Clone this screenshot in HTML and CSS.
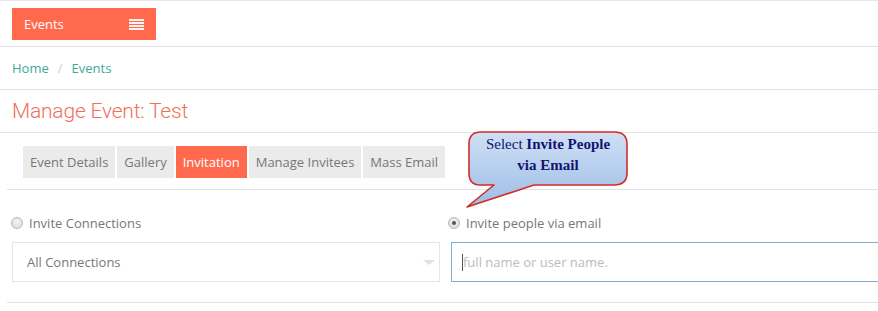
FILE: index.html
```html
<!DOCTYPE html>
<html>
<head>
<meta charset="utf-8">
<link rel="stylesheet" href="styles.css">
</head>
<body>
<div class="page">
  <div class="topbar">
    <div class="menu-btn">
      <span class="menu-label">Events</span>
      <span class="burger"><i></i><i></i><i></i><i></i></span>
    </div>
  </div>
  <div class="breadcrumb">
    <a class="crumb">Home</a><span class="sep">/</span><a class="crumb">Events</a>
  </div>
  <div class="title-row">
    <h1 class="title">Manage Event: Test</h1>
  </div>
  <div class="tabs-row">
    <div class="tabs">
      <span class="tab">Event Details</span>
      <span class="tab">Gallery</span>
      <span class="tab active">Invitation</span>
      <span class="tab">Manage Invitees</span>
      <span class="tab">Mass Email</span>
    </div>
  </div>
  <div class="form">
    <div class="col col-left">
      <label class="radio-line"><span class="radio"></span><span>Invite Connections</span></label>
      <div class="select">
        <span>All Connections</span>
        <span class="caret"></span>
      </div>
    </div>
    <div class="col col-right">
      <label class="radio-line"><span class="radio checked"></span><span>Invite people via email</span></label>
      <div class="input"><span class="cursor"></span><span class="placeholder">full name or user name.</span></div>
    </div>
  </div>

  <div class="callout">
    <svg class="callout-shape" width="170" height="84" viewBox="0 0 170 84">
      <defs>
        <linearGradient id="bg" x1="0" y1="0" x2="0" y2="1">
          <stop offset="0" stop-color="#cfe0f5"/>
          <stop offset="1" stop-color="#9dbde6"/>
        </linearGradient>
      </defs>
      <path d="M20 3 H148 Q161 3 161 15 V44 Q161 56 148 56 H68 L1 78 L28 56 H14 Q3 56 3 44 V15 Q3 3 15 3 Z" fill="url(#bg)" stroke="#d42a2a" stroke-width="1.6" stroke-linejoin="round"/>
    </svg>
    <div class="callout-text">Select <b>Invite People</b><br><b>via Email</b></div>
  </div>
</div>
</body>
</html>
```

FILE: styles.css
```css
* { box-sizing: border-box; }
html, body { margin: 0; padding: 0; background: #fff; }
body { overflow: hidden; width: 878px; height: 311px; }
.page {
  position: relative;
  font-family: "Open Sans", "Liberation Sans", sans-serif;
  font-size: 13px;
  color: #777;
}
.topbar {
  border-top: 1px solid #e6e8ea;
  border-bottom: 1px solid #dfe4e7;
  padding: 7px 12px 6px;
  height: 47px;
}
.menu-btn {
  width: 144px;
  height: 32px;
  background: #ff6a4f;
  display: flex;
  align-items: center;
  justify-content: space-between;
  padding: 0 12px 0 12px;
  color: #fff;
}
.menu-label { font-size: 13px; }
.burger { display: flex; flex-direction: column; gap: 1px; width: 15px; margin-top: 1px; }
.burger i { display: block; height: 2px; background: #fff3ee; }
.breadcrumb {
  height: 43px;
  border-bottom: 1px solid #dfe4e7;
  padding: 12px 12px 0;
  font-size: 13px;
}
.crumb { color: #3aa99c; }
.sep { color: #ccc; margin: 0 9px; }
.title-row {
  height: 43px;
  border-bottom: 1px solid #dfe4e7;
  padding: 0 12px;
}
.title {
  margin: 0;
  padding-top: 8px;
  font-family: Roboto, "Liberation Sans", sans-serif;
  font-weight: 300;
  font-size: 21px;
  letter-spacing: -0.2px;
  color: #f1705a;
  line-height: 26px;
}
.tabs-row {
  margin-left: 7px;
  height: 57px;
  border-bottom: 1px solid #dfe4e7;
  padding: 13px 0 0 16px;
}
.tabs { display: flex; gap: 2px; }
.tab {
  height: 32px;
  line-height: 32px;
  background: #ebebeb;
  color: #777;
  padding: 0 7px;
  font-size: 13px;
}
.tab.active { background: #ff6a4f; color: #fff; }
.form {
  margin-left: 7px;
  height: 113px;
  border-bottom: 1px solid #dfe4e7;
  display: flex;
  padding-top: 25px;
}
.col { display: flex; flex-direction: column; }
.col-left { flex: 0 0 444px; padding-left: 5px; }
.col-right { flex: 1 1 auto; min-width: 0; }
.radio-line { display: flex; align-items: center; gap: 6px; height: 16px; color: #777; }
.col-left .radio-line { margin-left: -1px; }
.col-right .radio-line { margin-left: -3px; }
.radio {
  flex: none;
  width: 12px; height: 12px; border-radius: 50%;
  border: 1px solid #b9b9b9;
  background: radial-gradient(circle at 50% 40%, #f4f4f4, #d8d8d8);
  position: relative;
}
.radio.checked::after {
  content: ""; position: absolute; left: 3px; top: 3px;
  width: 4px; height: 4px; border-radius: 50%; background: #555;
}
.select {
  margin-top: 11px;
  width: 428px; height: 40px;
  border: 1px solid #e6e6e6;
  display: flex; align-items: center; justify-content: space-between;
  padding: 0 4px 0 14px;
  color: #777;
}
.caret {
  width: 0; height: 0;
  border-left: 6px solid transparent;
  border-right: 6px solid transparent;
  border-top: 5px solid #d8e2ea;
}
.input {
  margin-top: 11px;
  width: 440px; height: 40px;
  flex: none;
  border: 1px solid #80aed0;
  display: flex; align-items: center;
  padding-left: 10px;
}
.cursor { width: 1px; height: 17px; background: #555; }
.placeholder { color: #bcbcbc; }
.callout {
  position: absolute;
  left: 466px; top: 129px;
  width: 170px; height: 84px;
}
.callout-shape { position: absolute; left: 0; top: 0; }
.callout-text {
  position: absolute;
  left: 3px; top: 5px; width: 158px;
  text-align: center;
  font-family: "Liberation Serif", serif;
  font-size: 15px;
  line-height: 21px;
  color: #131370;
}
.callout-text b { font-weight: bold; }
```
